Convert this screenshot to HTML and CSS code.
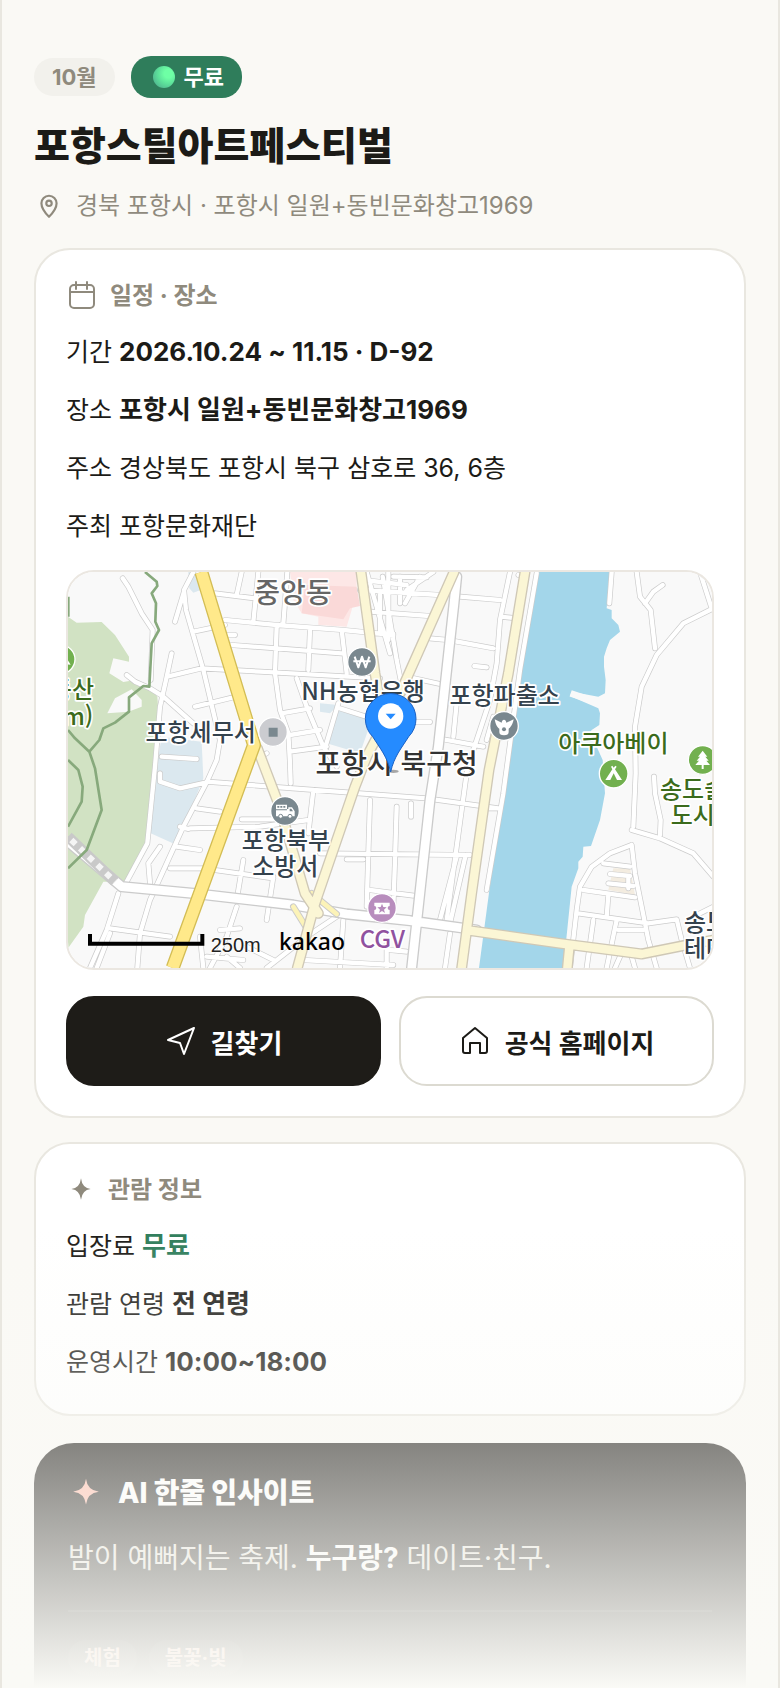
FILE: index.html
```html
<!DOCTYPE html>
<html lang="ko">

<head>
    <meta charset="utf-8">
    <meta name="viewport" content="width=device-width, initial-scale=1.0">
    <title>포항스틸아트페스티벌</title>
    <link rel="stylesheet" href="styles.css">
</head>

<body>

    <main class="page">
        <header class="top">
            <div class="badges">
                <span class="badge">10월</span>
                <span class="badge free"><span class="dot"></span>무료</span>
            </div>
            <h1>포항스틸아트페스티벌</h1>
            <p class="location">
                <svg class="icon" viewBox="0 0 24 24" aria-hidden="true">
                    <path d="M12 22s7-7 7-12.500a7 7 0 0 0-14 0C5 15 12 22 12 22z" />
                    <circle cx="12" cy="9.500" r="2.500" />
                </svg>
                경북 포항시 · 포항시 일원+동빈문화창고1969
            </p>
        </header>

        <section class="card">
            <h2>
                <svg class="icon" viewBox="0 0 32 32" aria-hidden="true">
                    <rect x="4" y="5" width="24" height="23" rx="4" />
                    <path d="M4 12h24M10 2v7M21 2v7" />
                </svg>
                일정 · 장소
            </h2>
            <div class="rows">
                <p>기간 <b>2026.10.24 ~ 11.15 · D-92</b></p>
                <p>장소 <b>포항시 일원+동빈문화창고1969</b></p>
                <p>주소 경상북도 포항시 북구 삼호로 36, 6층</p>
                <p>주최 포항문화재단</p>
            </div>

            <div class="map">
                <svg viewBox="24 36 1932 1188" preserveAspectRatio="xMidYMid slice" role="img" aria-label="지도">
                    <defs>
                        <path id="minor" d="M188 55L205 80 245 160 278 210 272 360M400 36L372 90 378 150 430 330 480 540 470 600 440 667 370 800 270 1020 240 1120 232 1224M345 185L372 95M465 100L585 115M545 36L530 105M595 36L580 185M495 180L650 195 850 210 1000 225M400 215L495 195M505 225H525M515 255L845 280M682 36L670 190 650 200 645 340 660 450 685 520 690 610 692 670M750 210L745 330M845 210L860 340M322 350L425 325 600 335 960 355M335 280L318 360 300 440 285 620 262 850 200 965M200 345L225 365 270 385 310 410 400 490M405 440L520 412M710 355L740 440 790 560 830 620M835 430L795 565M665 460L750 445M690 525L780 510M690 575L800 560M840 445L950 480M305 590L410 597M300 640L300 665 360 685 440 667M440 665L700 685 1100 715 1315 745M620 580L600 590M410 745L480 755M545 778H640M390 805L600 800 745 780M760 690L745 820M360 800L385 807M350 860L420 870M330 925L430 925 640 955M300 860L265 910 270 970M550 900L530 1020M640 950L620 1080M530 1040L500 1130 450 1224M150 1105L330 1130M175 1000L140 1110 90 1224M150 1120L110 1224M420 1130L430 1224M480 1110L540 1105M440 1190L550 1200M500 1190L540 1224M560 1160L640 1200M830 1070L740 1130 620 1224M850 1080L840 1224M730 1200L1000 1215M860 898H910M930 720L920 1040M1010 740L1005 900 1000 1040M780 880L1230 885M930 990L1060 1007M1053 770V730M968 50L1010 300 1030 400M920 36L990 280M910 60L1040 75M900 90L1140 105M930 155L1110 168M960 95V220M1020 50V130M985 36V240M935 220L1000 222M1080 50L1035 130M1120 36L1040 90M1000 50L1100 52M1350 36L1320 180 1310 310 1290 420 1240 570 1220 640 1160 1080M1200 110L1320 120M1110 235L1165 240 1300 265M1322 170L1370 175M1375 45L1400 48M1243 318L1280 322M1040 350L1140 372M1190 430L1180 530M1150 538L1270 560M1110 486L1070 486M1190 890L1140 1080M1170 1120L1155 1224M1217 885L1170 1090M1430 40L1380 330 1330 700 1280 990M1265 745H1315M990 1170L1040 1175M980 1150V1224M1300 470L1280 540" />
                        <path id="coast" d="M1655 36L1648 130M1730 36L1740 110 1772 150 1785 265M1755 130L1780 95 1808 75M1920 36L1955 145M1960 145L1870 190 1790 285 1745 380 1725 500 1727 640 1720 800M1782 650L1785 700 1802 780 1800 825M1715 810L1800 835 1900 880 1960 950M1715 855L1650 880 1595 920 1560 980 1550 1050 1530 1224M1715 855L1725 940 1745 1040 1765 1140 1790 1224M1570 990L1725 1012M1645 1005L1640 1070M1555 1060L1765 1090 1850 1078 1865 1140 1890 1224M1670 1080L1640 1224M1600 1080L1580 1224M1675 1110H1750M1630 910L1710 920M1650 942L1710 948M1645 970L1720 978M1705 950V985M1715 1190L1725 1224M1960 1040L1900 1070M1680 1190L1665 1224" />
                        <path id="avenue" d="M1190 50L1182 130 1135 560 1110 720 1055 1224M24 845L185 980 400 1000 700 1035 860 1062 1050 1082 1250 1110" />
                        <path id="cream" d="M592 565L655 730 700 880 735 1000 775 1060M903 36L945 340 955 400M1182 36L1020 400 920 590 885 680 765 1030 712 1224M1395 36L1345 340 1287 630 1235 1000 1205 1224M1230 1112L1500 1150 1745 1182 1880 1155 1960 1140M1528 1160L1522 1224" />
                        <path id="ramp" d="M700 1040L740 1105M755 1000L830 1062" />
                        <path id="main" d="M424 36L582 555 338 1224" />
                    </defs>

                    <rect class="land" x="24" y="36" width="1932" height="1188" />
                    <path class="park" d="M24 170L50 188 125 186 165 225 207 290 207 305 160 295 148 340 190 366 225 360 275 390 292 410 295 450 285 620 262 850 200 965 130 965 75 1065 70 1100 24 1165z" />
                    <path class="land" d="M142 460L165 415 215 388 245 420 245 440 205 455z" />
                    <path class="block" d="M305 530L425 545 430 655 350 855 262 815 290 620zM835 445L935 480 900 580 800 550zM780 430L835 435 810 460 780 455zM385 36H405L422 90 400 98 388 85z" />
                    <path class="pink light" d="M690 36H890L890 80 875 150 860 200 775 195 775 170 725 160 700 120z" />
                    <path class="pink" d="M735 75L890 80 900 138 870 145 850 178 725 160z" />
                    <path class="sand" d="M1660 925L1710 925 1725 1005 1645 990z" />
                    <path class="water" d="M1433 36H1650L1640 145 1655 150 1655 175 1675 195 1680 215 1650 240 1640 265 1632 290 1632 320 1637 360 1635 400 1615 410 1535 395 1530 408 1615 445 1620 460 1618 495 1595 510 1585 525 1610 560 1628 600 1635 700 1620 780 1593 858 1570 860 1568 890 1555 905 1555 925 1535 980 1510 1224H1257L1340 600 1372 400z" />
                    <path class="pier" d="M1532 400L1615 428" />

                    <use href="#minor" class="edge thin" /><use href="#coast" class="edge thin" />
                    <use href="#minor" class="road thin" /><use href="#coast" class="road thin" />
                    <use href="#avenue" class="edge wide" /><use href="#avenue" class="road wide" />
                    <path class="rail" d="M24 830L165 965" />
                    <path class="rail dash" d="M34 840L165 965" />
                    <path class="trail" d="M255 36L290 65 292 78 275 100 288 130 286 185 297 210 275 250 268 380 250 378 207 412 207 455 165 488 130 505 118 540 88 575 105 625 125 750 80 870 24 925M24 510L45 535 88 575M24 600L55 630 68 680 65 725 24 800M25 110V170" />
                    <use href="#ramp" class="edge ramp" /><use href="#ramp" class="yellow ramp" />
                    <use href="#cream" class="edge tan" /><use href="#cream" class="cream" />
                    <use href="#main" class="gold" /><use href="#main" class="yellow" />

                    <g class="spot">
                        <circle class="green" cx="2" cy="298" r="43" />
                        <path class="glyph" d="M8 312L18 292 32 314z" />
                        <circle cx="906" cy="306" r="43" />
                        <path class="line" d="M884 290L895 322 906 290 917 322 928 290M880 304H932" />
                        <circle class="pale" cx="639" cy="516" r="43" />
                        <path class="square" d="M626 503h27v27h-27z" />
                        <circle cx="1332" cy="498" r="43" />
                        <path class="glyph" d="M1304 478L1325 488C1326 476 1338 476 1339 488L1361 478C1358 495 1350 504 1346 506V516A14 10 0 0 1 1318 516V506C1313 503 1307 496 1304 478z" />
                        <circle class="hole" cx="1332" cy="508" r="6" />
                        <circle cx="675" cy="753" r="43" />
                        <path class="glyph" d="M648 734h33v13h4v-5h11l8 12v15h-56v-18h33v-3h-33z" />
                        <path class="hole" d="M652 738h6v5h-6zM661 738h6v5h-6zM670 738h6v5h-6zM689 746h5l5 8h-10z" />
                        <circle class="wheel" cx="662" cy="769" r="6" /><circle class="wheel" cx="690" cy="769" r="6" />
                        <circle class="purple" cx="966" cy="1044" r="43" />
                        <path class="glyph" d="M943 1028h46v10a6 6 0 0 0 0 12v13h-46v-13a6 6 0 0 0 0-12z" />
                        <path class="purple star" d="M966 1031l4 10 10 1-8 7 3 10-9-6-9 6 3-10-8-7 10-1z" />
                        <circle class="green" cx="1661" cy="641" r="43" />
                        <path class="glyph" d="M1653 620L1657 617 1661 623 1666 617 1670 620 1665 628 1686 660H1636L1657 628z" />
                        <path class="green star" d="M1661 640L1671 660H1651z" />
                        <circle class="green" cx="1928" cy="600" r="43" />
                        <path class="glyph" d="M1928 572L1942 590H1936L1946 602H1939L1950 615H1931V627H1925V615H1906L1917 602H1910L1920 590H1914z" />
                    </g>

                    <g class="label">
                        <text class="area" x="699" y="129">중앙동</text>
                        <text x="909" y="421">NH농협은행</text>
                        <text x="1334" y="433">포항파출소</text>
                        <text x="422" y="543">포항세무서</text>
                        <text class="office" x="1010" y="643">포항시 북구청</text>
                        <text x="678" y="868">포항북부</text>
                        <text x="676" y="946">소방서</text>
                        <text class="cinema" x="967" y="1163">CGV</text>
                        <text class="nature" x="1660" y="576">아쿠아베이</text>
                        <text class="nature start" x="1800" y="714">송도솔밭</text>
                        <text class="nature start" x="1832" y="792">도시숲</text>
                        <text class="start" x="1872" y="1112">송도</text>
                        <text class="start" x="1872" y="1190">테마</text>
                        <text class="nature end" x="102" y="415">동산</text>
                        <text class="nature end" x="100" y="494">m)</text>
                    </g>

                    <ellipse class="shadow" cx="1000" cy="634" rx="16" ry="5" />
                    <path class="pin" d="M992 636C982 590 960 565 938 530A76 76 0 1 1 1046 530C1024 565 1002 590 992 636z" />
                    <circle class="pin-hole" cx="992" cy="468" r="38" />
                    <path class="pin-mark" d="M977 461H1007L992 478z" />

                    <path class="scale" d="M90 1122V1151H427V1122" />
                    <text class="meters" x="452" y="1175">250m</text>
                    <text class="brand" x="657" y="1169">kakao</text>
                </svg>
            </div>

            <div class="actions">
                <a href="#" class="btn dark">
                    <svg class="icon" viewBox="0 0 32 32" aria-hidden="true">
                        <path d="M29 3L3 15l12 3 4 11z" />
                    </svg>
                    길찾기
                </a>
                <a href="#" class="btn">
                    <svg class="icon" viewBox="0 0 32 32" aria-hidden="true">
                        <path d="M4 13L16 3l12 10v13a2 2 0 0 1-2 2h-5v-10H11v10H6a2 2 0 0 1-2-2z" />
                    </svg>
                    공식 홈페이지
                </a>
            </div>
        </section>

        <section class="card">
            <h2>
                <svg class="icon spark" viewBox="0 0 28 28" aria-hidden="true">
                    <path d="M14 3Q15 12 23 13 15 14 14 23 13 14 5 13 13 12 14 3z" />
                </svg>
                관람 정보
            </h2>
            <div class="rows">
                <p>입장료 <b class="green-text">무료</b></p>
                <p>관람 연령 <b>전 연령</b></p>
                <p>운영시간 <b>10:00~18:00</b></p>
            </div>
        </section>

        <section class="insight">
            <h2>
                <svg class="icon spark" viewBox="0 0 28 28" aria-hidden="true">
                    <path d="M14 3Q15 12 24 13 15 14 14 23 13 14 4 13 13 12 14 3z" />
                </svg>
                AI 한줄 인사이트
            </h2>
            <p>밤이 예뻐지는 축제. <b>누구랑?</b> 데이트·친구.</p>
            <div class="tags">
                <span>체험</span>
                <span>불꽃·빛</span>
            </div>
        </section>

        <div class="fade"></div>
    </main>

</body>

</html>
```

FILE: styles.css
```css
* {
    box-sizing: border-box;
}

body {
    margin: 0;
    background: #faf9f5;
    color: #1c1b17;
    font-family: Inter, "Noto Sans CJK KR", sans-serif;
    font-size: 25px;
}

h1,
h2,
p {
    margin: 0;
}

.page {
    position: relative;
    height: 100vh;
    overflow: hidden;
    padding: 56px 32px 0;
    border: solid #e9e7e0;
    border-width: 0 2px;
}

.icon {
    flex: none;
    width: 32px;
    height: 32px;
    fill: none;
    stroke: currentColor;
    stroke-width: 2;
    stroke-linejoin: round;
    stroke-linecap: round;
}

.spark {
    width: 30px;
    fill: currentColor;
    stroke: none;
}

.badges {
    display: flex;
    align-items: center;
    gap: 16px;
}

.badge {
    padding: 0 18px;
    border-radius: 20px;
    background: #f2f1ec;
    color: #8f8a7d;
    font-size: 22px;
    font-weight: 700;
    line-height: 38px;
}

.free {
    display: flex;
    align-items: center;
    gap: 9px;
    padding: 0 18px 0 22px;
    background: #2f7d5b;
    color: #fff;
    line-height: 42px;
}

.dot {
    width: 22px;
    height: 22px;
    border-radius: 50%;
    background: radial-gradient(circle at 70% 35%, #6effa5 20%, #5ce09a 50%, #4a9f8a 100%);
}

h1 {
    margin-top: 22px;
    font-size: 39px;
    font-weight: 800;
    line-height: 52px;
}

.location {
    display: flex;
    align-items: center;
    gap: 12px;
    margin: 18px 0 26px;
    color: #8f8a7d;
    font-size: 24px;
    line-height: 32px;
}

.location .icon {
    width: 30px;
    height: 26px;
}

.card {
    margin-bottom: 24px;
    padding: 30px;
    border: 2px solid #e9e7e0;
    border-radius: 36px;
    background: #fff;
}

h2 {
    display: flex;
    align-items: center;
    gap: 12px;
    color: #8f8a7d;
    font-size: 24px;
    font-weight: 700;
    line-height: 32px;
}

.rows {
    display: grid;
    gap: 14px;
    margin-top: 18px;
    line-height: 44px;
}

.rows b {
    font-size: 26px;
}

.green-text {
    color: #2f7d5b;
}

/* map */
.map {
    height: 400px;
    margin: 22px 0 26px;
    overflow: hidden;
    border: 2px solid #ebe7e1;
    border-radius: 28px;
}

.map svg {
    display: block;
    width: 100%;
    height: 100%;
    fill: none;
    stroke-linejoin: round;
}

.land { fill: #f9f9f9; }
.park { fill: #d1e2c3; }
.block { fill: #dbe8ef; }
.pink { fill: #fad9d8; }
.pink.light { fill: #fde7e6; }
.sand { fill: #f3ece0; }
.water { fill: #a3d6ea; }

.pier {
    stroke: #f9f9f9;
    stroke-width: 20;
}

.edge {
    stroke: #cbcbcb;
    stroke-linecap: round;
}

.edge.thin { stroke-width: 17; }
.edge.wide { stroke-width: 34; }
.edge.ramp { stroke-width: 20; }

.edge.tan {
    stroke: #cfc8b6;
    stroke-width: 33;
}

.road {
    stroke: #fff;
    stroke-linecap: round;
}

.road.thin { stroke-width: 13; }
.road.wide { stroke-width: 26; }

.cream {
    stroke: #fbf6d5;
    stroke-width: 25;
    stroke-linecap: round;
}

.gold {
    stroke: #d3bd55;
    stroke-width: 42;
}

.yellow {
    stroke: #ffe98a;
    stroke-width: 34;
}

.yellow.ramp {
    stroke: #fcf3b8;
    stroke-width: 14;
    stroke-linecap: round;
}

.rail {
    stroke: #c9c9c9;
    stroke-width: 32;
}

.rail.dash {
    stroke: #f4f4f4;
    stroke-width: 18;
    stroke-dasharray: 18 18;
}

.trail {
    stroke: #87a97c;
    stroke-width: 8;
}

.spot circle {
    fill: #7a888f;
    stroke: #fff;
    stroke-width: 4;
}

.spot .pale { fill: #cbccd0; }
.spot .green { fill: #72b04f; }
.spot .purple { fill: #b88dbd; }
.spot .star { stroke: none; }
.spot .glyph { fill: #fff; }
.spot .square { fill: #7a888f; }

.spot .hole {
    fill: #7a888f;
    stroke: none;
}

.spot .wheel {
    fill: #fff;
    stroke: #7a888f;
    stroke-width: 3;
}

.spot .line {
    stroke: #fff;
    stroke-width: 6;
}

.label text {
    fill: #34424d;
    stroke: #fff;
    stroke-width: 10;
    paint-order: stroke;
    text-anchor: middle;
    font-family: "Noto Sans CJK KR", sans-serif;
    font-size: 72px;
    font-weight: 500;
}

.label .area {
    fill: #666;
    font-size: 84px;
}

.label .office {
    fill: #333;
    font-size: 84px;
}

.label .cinema { fill: #90529f; }
.label .nature { fill: #3b6b1c; }
.label .start { text-anchor: start; }
.label .end { text-anchor: end; }

.shadow {
    fill: #555;
    opacity: .5;
}

.pin {
    fill: #258bff;
    stroke: #1c62c4;
    stroke-width: 3;
}

.pin-hole { fill: #fff; }
.pin-mark { fill: #258bff; }

.scale {
    stroke: #000;
    stroke-width: 12;
    stroke-linejoin: miter;
}

.meters {
    fill: #222;
    stroke: #fff;
    stroke-width: 4;
    paint-order: stroke;
    font-family: "Liberation Sans", sans-serif;
    font-size: 60px;
}

.brand {
    fill: #000;
    font-family: "Noto Sans", sans-serif;
    font-size: 69px;
    font-weight: 500;
}

.actions {
    display: grid;
    grid-template-columns: 1fr 1fr;
    gap: 18px;
}

.btn {
    display: flex;
    align-items: center;
    justify-content: center;
    gap: 14px;
    height: 90px;
    border: 2px solid #dcdad1;
    border-radius: 28px;
    background: #fff;
    color: #1c1b17;
    font-size: 26px;
    font-weight: 700;
    text-decoration: none;
}

.btn.dark {
    border-color: #1e1c18;
    background: #1e1c18;
    color: #fff;
}

.insight {
    margin-top: 27px;
    padding: 34px 34px 60px;
    border-radius: 40px;
    background: #1e1c18;
    color: #e4e1d8;
    font-size: 28px;
    line-height: 44px;
}

.insight h2 {
    gap: 14px;
    color: #fff;
    font-size: 28px;
    font-weight: 800;
}

.insight .icon {
    width: 36px;
    height: 36px;
    margin: -2px 0;
    color: #ffb5a2;
}

.insight p {
    margin: 27px 0 30px;
}

.insight b {
    color: #fff;
}

.tags {
    display: flex;
    gap: 12px;
    padding-top: 28px;
    border-top: 2px solid #35332f;
}

.tags span {
    padding: 0 16px;
    border-radius: 20px;
    background: #2f2c28;
    color: #ffc9bc;
    font-size: 20px;
    font-weight: 700;
    line-height: 36px;
}

.fade {
    position: absolute;
    right: -2px;
    bottom: 0;
    left: -2px;
    height: 460px;
    background: linear-gradient(to bottom, rgba(250, 250, 246, 0), #fafaf6);
    pointer-events: none;
}
```
